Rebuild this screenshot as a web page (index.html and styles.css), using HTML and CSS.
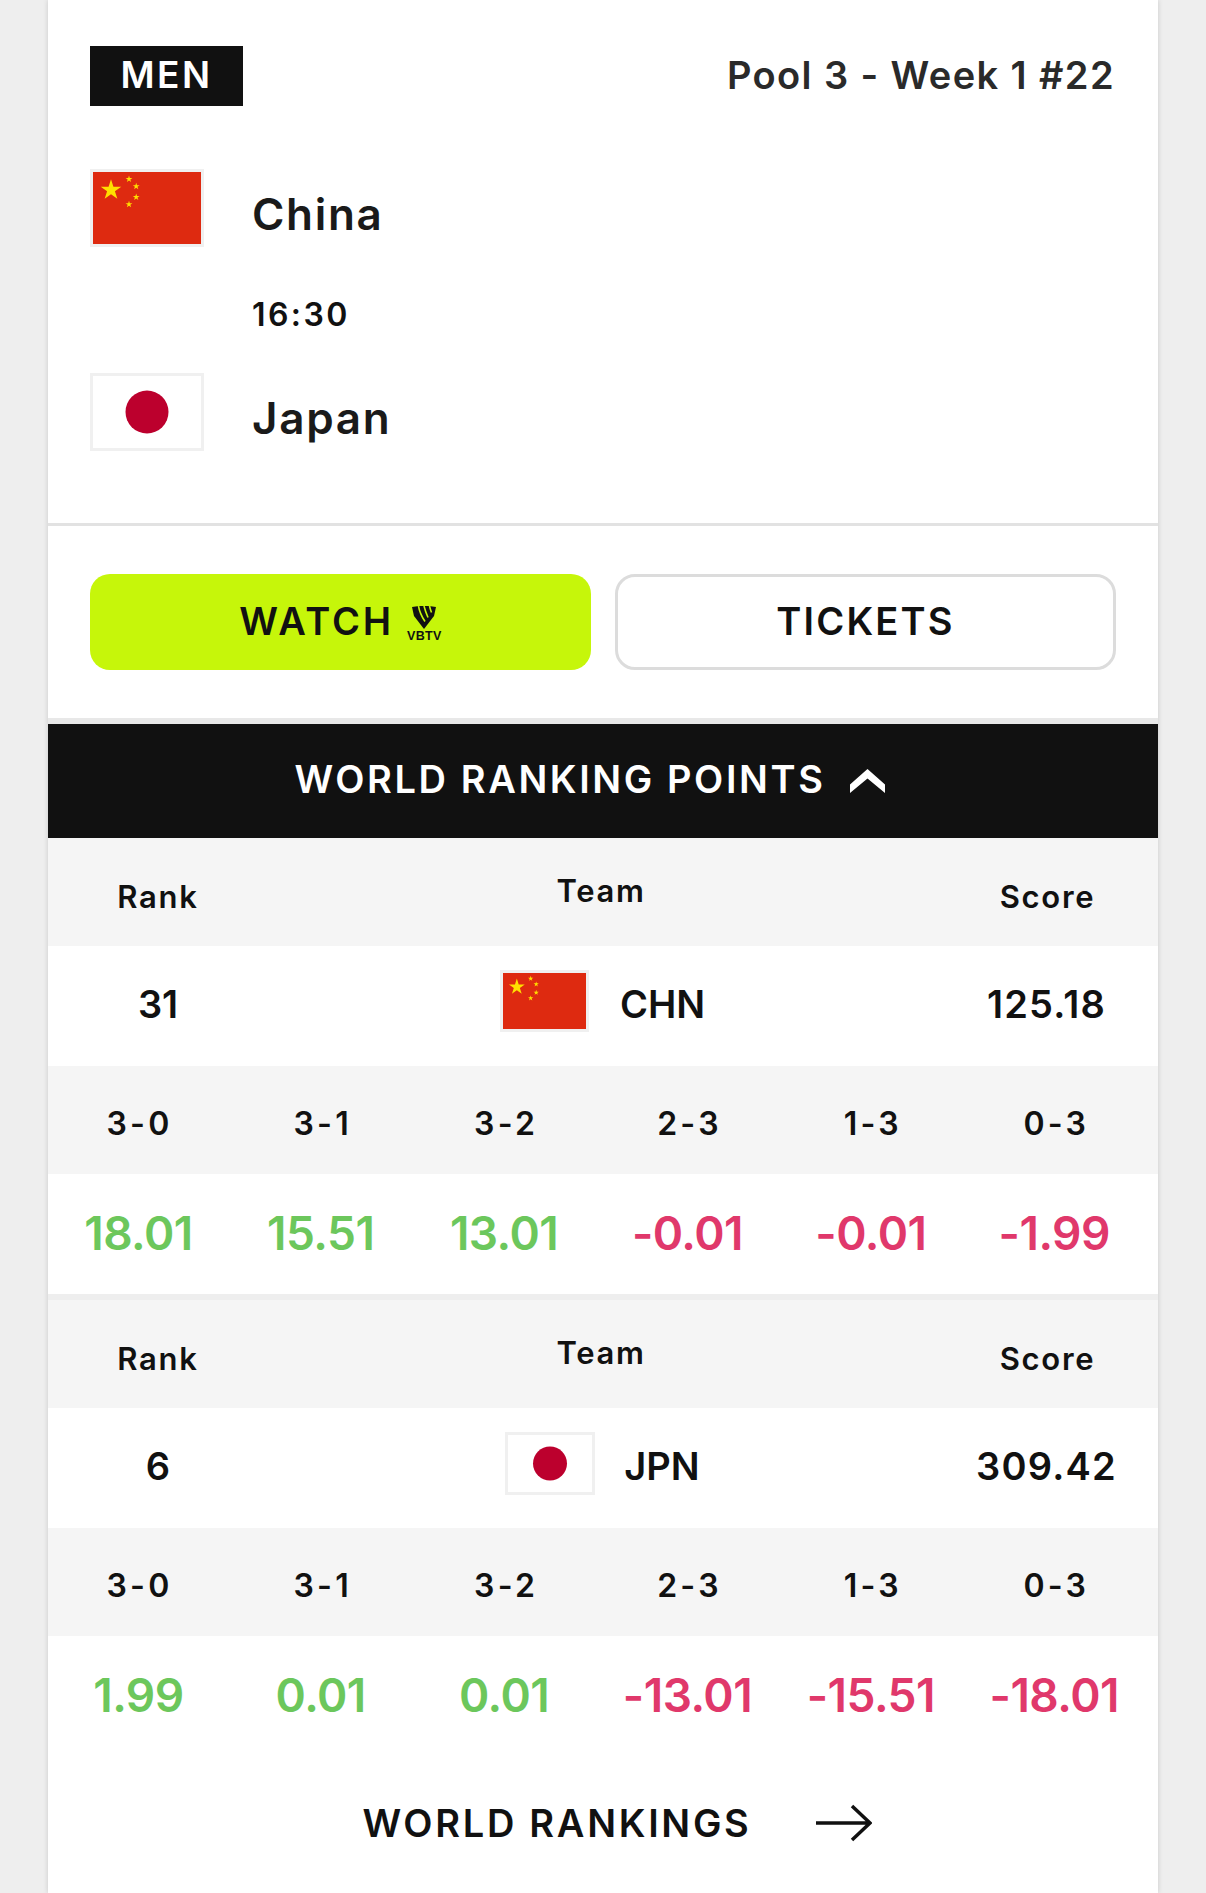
FILE: index.html
```html
<!DOCTYPE html>
<html lang="en">
<head>
<meta charset="utf-8">
<title>China v Japan</title>
<link rel="stylesheet" href="styles.css">
</head>
<body>
<main class="card">
  <section class="match">
    <div class="match-top">
      <span class="badge">MEN</span>
      <span class="pool">Pool 3 - Week 1 #22</span>
    </div>
    <div class="team-line">
      <span class="flag flag-lg">
        <svg viewBox="0 0 30 20" preserveAspectRatio="none">
          <defs><polygon id="star" points="0,-1 .225,-.309 .951,-.309 .363,.118 .588,.809 0,.382 -.588,.809 -.363,.118 -.951,-.309 -.225,-.309"/></defs>
          <rect width="30" height="20" fill="#de2a10"/>
          <g fill="#ffdf00">
            <use href="#star" transform="translate(5 5) scale(3)"/>
            <use href="#star" transform="translate(10 2)"/>
            <use href="#star" transform="translate(12 4)"/>
            <use href="#star" transform="translate(12 7)"/>
            <use href="#star" transform="translate(10 9)"/>
          </g>
        </svg>
      </span>
      <span class="team-name">China</span>
    </div>
    <div class="time">16:30</div>
    <div class="team-line">
      <span class="flag flag-lg">
        <svg viewBox="0 0 108 72" preserveAspectRatio="none">
          <rect width="108" height="72" fill="#fff"/>
          <ellipse cx="54" cy="36" rx="21.5" ry="21.5" fill="#bc002d"/>
        </svg>
      </span>
      <span class="team-name">Japan</span>
    </div>
  </section>

  <section class="actions">
    <a class="btn btn-watch">
      <span>WATCH</span>
      <span class="vbtv">
        <svg class="vbtv-mark" viewBox="0 0 24 23">
          <path d="M0 1 7 0 17 0 24 1 22 10 12 23 2 10Z" fill="#111"/>
          <path d="M6.500 0C7.500 6 10 11 13 15.500M12 0C13 4 14.500 8 16 11.500M17.500 0C18 2 18.500 4 19.500 6.500" stroke="#c6f60a" stroke-width="1.600" fill="none"/>
        </svg>
        <span class="vbtv-text">VBTV</span>
      </span>
    </a>
    <a class="btn btn-tickets">TICKETS</a>
  </section>

  <div class="wrp-bar">
    <span>WORLD RANKING POINTS</span>
    <svg class="chevron" viewBox="0 0 35 24"><path d="M0 15.500 17.500 0 35 15.500V24L17.500 9.500 0 24z" fill="#fff"/></svg>
  </div>

  <section class="rank-block">
    <div class="rank-head">
      <span>Rank</span><span class="team-label">Team</span><span class="score-label">Score</span>
    </div>
    <div class="rank-row">
      <span>31</span>
      <span class="rank-team">
        <span class="flag flag-sm">
          <svg viewBox="0 0 30 20" preserveAspectRatio="none">
            <rect width="30" height="20" fill="#de2a10"/>
            <g fill="#ffdf00">
              <use href="#star" transform="translate(5 5) scale(3)"/>
              <use href="#star" transform="translate(10 2)"/>
              <use href="#star" transform="translate(12 4)"/>
              <use href="#star" transform="translate(12 7)"/>
              <use href="#star" transform="translate(10 9)"/>
            </g>
          </svg>
        </span>
        <span>CHN</span>
      </span>
      <span class="score">125.18</span>
    </div>
    <div class="sets sets-head">
      <span>3-0</span><span>3-1</span><span>3-2</span><span>2-3</span><span>1-3</span><span>0-3</span>
    </div>
    <div class="sets sets-values">
      <span class="up">18.01</span><span class="up">15.51</span><span class="up">13.01</span><span class="down">-0.01</span><span class="down">-0.01</span><span class="down">-1.99</span>
    </div>
  </section>

  <section class="rank-block rank-block-second">
    <div class="rank-head">
      <span>Rank</span><span class="team-label">Team</span><span class="score-label">Score</span>
    </div>
    <div class="rank-row">
      <span>6</span>
      <span class="rank-team rank-team-jpn">
        <span class="flag flag-sm flag-jpn">
          <svg viewBox="0 0 84 57" preserveAspectRatio="none">
            <rect width="84" height="57" fill="#fff"/>
            <ellipse cx="42" cy="28.500" rx="17" ry="17" fill="#bc002d"/>
          </svg>
        </span>
        <span>JPN</span>
      </span>
      <span class="score">309.42</span>
    </div>
    <div class="sets sets-head">
      <span>3-0</span><span>3-1</span><span>3-2</span><span>2-3</span><span>1-3</span><span>0-3</span>
    </div>
    <div class="sets sets-values">
      <span class="up">1.99</span><span class="up">0.01</span><span class="up">0.01</span><span class="down">-13.01</span><span class="down">-15.51</span><span class="down">-18.01</span>
    </div>
  </section>

  <a class="rankings-link">
    <span>WORLD RANKINGS</span>
    <svg class="arrow" viewBox="0 0 56 38"><path d="M0 19H53M36 2l18 17-18 17" fill="none" stroke="#111" stroke-width="3.500"/></svg>
  </a>
</main>
</body>
</html>
```

FILE: styles.css
```css
* { box-sizing: border-box; }

html, body {
  margin: 0;
  height: 1893px;
  overflow: hidden;
}

body {
  background: #eeeeee;
  font-family: Inter, "Liberation Sans", sans-serif;
  color: #111;
}

.card {
  width: 1110px;
  height: 1893px;
  margin-left: 48px;
  background: #fff;
  box-shadow: 0 0 5px rgba(0, 0, 0, 0.16);
}

.match {
  height: 526px;
  padding: 46px 42px 0;
  border-bottom: 3px solid #e2e2e2;
}

.match-top {
  display: flex;
  justify-content: space-between;
  align-items: center;
  height: 60px;
  margin-bottom: 63px;
}

.badge {
  display: flex;
  align-items: center;
  justify-content: center;
  width: 153px;
  height: 60px;
  padding-bottom: 3px;
  background: #111;
  color: #fff;
  font-size: 37px;
  font-weight: 600;
  letter-spacing: 2.4px;
}

.pool {
  color: #2a2a2a;
  font-size: 38px;
  font-weight: 600;
  letter-spacing: 1.4px;
  margin: 0 1px 3px 0;
}

.team-line {
  display: flex;
  align-items: center;
  gap: 48px;
  height: 78px;
}

.flag {
  display: block;
  flex: none;
  border: 3px solid #f0f0f0;
}

.flag svg {
  display: block;
  width: 100%;
  height: 100%;
}

.flag-lg {
  width: 114px;
  height: 78px;
}

.team-name {
  font-size: 44px;
  font-weight: 600;
  letter-spacing: 1.7px;
  color: #1a1a1a;
  position: relative;
  top: 6px;
}

.time {
  height: 126px;
  padding: 48px 0 0 162px;
  font-size: 32px;
  line-height: 40px;
  font-weight: 600;
  letter-spacing: 2.4px;
}

.actions {
  display: flex;
  gap: 24px;
  height: 192px;
  padding: 48px 42px;
}

.btn {
  display: flex;
  align-items: center;
  justify-content: center;
  height: 96px;
  border-radius: 20px;
  font-size: 38px;
  font-weight: 600;
  padding-bottom: 2px;
}

.btn-watch {
  flex: none;
  width: 501px;
  gap: 13px;
  background: #c6f60a;
  letter-spacing: 2.8px;
}

.btn-tickets {
  flex: 1;
  border: 3px solid #dcdcdc;
  letter-spacing: 2.2px;
}

.vbtv {
  display: flex;
  flex-direction: column;
  align-items: center;
  gap: 2px;
  margin-top: 6px;
}

.vbtv-mark {
  display: block;
  width: 24px;
  height: 23px;
}

.vbtv-text {
  font-family: "Liberation Sans", sans-serif;
  font-size: 12.5px;
  line-height: 11px;
  font-weight: 700;
  letter-spacing: 0.4px;
}

.wrp-bar {
  display: flex;
  align-items: center;
  justify-content: center;
  gap: 25px;
  height: 114px;
  margin-top: 6px;
  padding: 0 26px 4px 0;
  background: #111;
  color: #fff;
  font-size: 38px;
  font-weight: 600;
  letter-spacing: 2.600px;
  box-shadow: 0 -6px 0 #e8e8e8;
}

.chevron {
  display: block;
  width: 35px;
  height: 24px;
  margin-top: 3px;
}

.rank-head {
  display: grid;
  grid-template-columns: 220px 1fr 226px;
  align-items: center;
  height: 108px;
  padding-top: 8px;
  background: #f5f5f5;
  font-size: 31px;
  font-weight: 600;
  letter-spacing: 1.7px;
  text-align: center;
}

.team-label {
  padding: 0 0 12px 2px;
}

.score-label {
  padding-left: 5px;
}

.rank-row {
  display: grid;
  grid-template-columns: 220px 1fr 226px;
  align-items: center;
  height: 120px;
  padding-bottom: 4px;
  font-size: 38px;
  font-weight: 600;
  text-align: center;
}

.score {
  letter-spacing: 1.2px;
  padding-left: 3px;
}

.rank-team {
  display: flex;
  align-items: center;
  justify-content: center;
  gap: 31px;
  padding-left: 5px;
}

.rank-team-jpn {
  gap: 29px;
}

.flag-sm {
  width: 89px;
  height: 62px;
  margin-bottom: 6px;
}

.flag-jpn {
  width: 90px;
  height: 63px;
}

.sets {
  display: grid;
  grid-template-columns: 183px repeat(5, 183.4px);
  align-items: center;
  text-align: center;
}

.sets-head {
  height: 108px;
  padding-top: 6px;
  background: #f5f5f5;
  font-size: 32px;
  font-weight: 600;
  letter-spacing: 3.2px;
}

.sets-values {
  grid-template-columns: 181px repeat(5, 183.4px);
  height: 120px;
  padding-bottom: 2px;
  font-size: 46px;
  font-weight: 600;
  letter-spacing: -0.5px;
}

.up { color: #6cc75c; }
.down { color: #e0386b; }

.rank-block-second {
  margin-top: 6px;
  box-shadow: 0 -6px 0 #eeeeee;
}

.rankings-link {
  display: flex;
  align-items: center;
  justify-content: center;
  gap: 64px;
  height: 137px;
  padding: 0 0 4px 28px;
  font-size: 38px;
  font-weight: 600;
  letter-spacing: 2.7px;
}

.arrow {
  display: block;
  width: 56px;
  height: 38px;
}
```
